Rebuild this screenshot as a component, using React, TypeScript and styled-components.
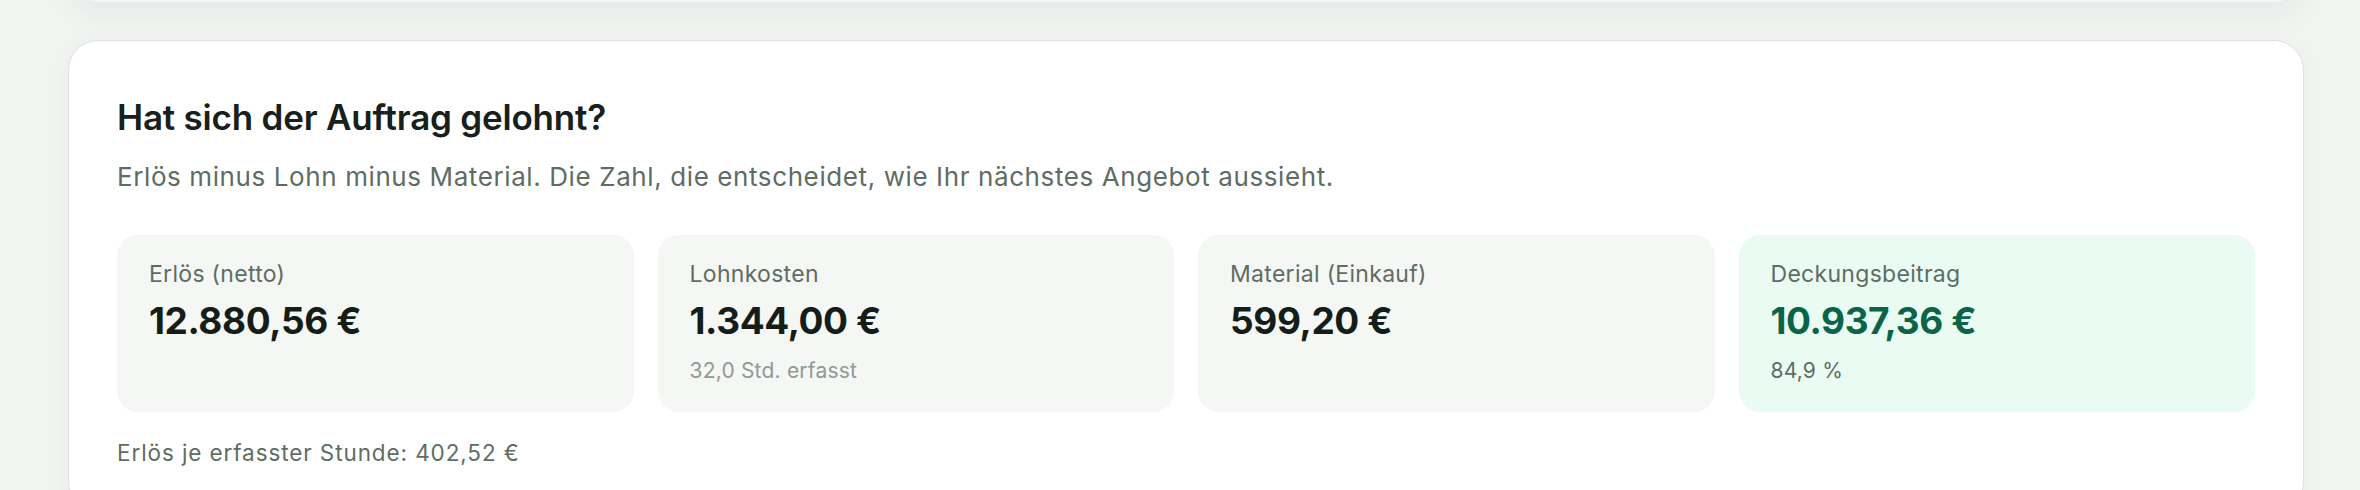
import React from "react";
import styled, { createGlobalStyle } from "styled-components";

const GlobalStyle = createGlobalStyle`
  html, body {
    margin: 0;
    padding: 0;
    background: #f2f4f2;
    font-family: Inter, "Liberation Sans", Arial, sans-serif;
    overflow: hidden;
  }
  * { box-sizing: border-box; }
`;

const Page = styled.main`
  display: flex;
  flex-direction: column;
  gap: 38px;
  padding: 0 56px 40px 68px;
  margin-top: -200px;
`;

const PrevCard = styled.div`
  height: 202px;
  border-radius: 30px;
  background: #f5f6f5;
  box-shadow: 0 12px 32px rgba(20, 40, 30, 0.05);
`;

const Card = styled.section`
  background: #ffffff;
  border: 1px solid #dde2dd;
  border-radius: 30px;
  box-shadow: 0 4px 24px rgba(20, 40, 30, 0.04);
  padding: 54px 48px 42px;
  display: flex;
  flex-direction: column;
`;

const Title = styled.h2`
  margin: 0;
  font-size: 35px;
  line-height: 44px;
  font-weight: 600;
  color: #17201b;
  letter-spacing: -0.2px;
`;

const Subtitle = styled.p`
  margin: 19px 0 0;
  font-size: 26px;
  line-height: 38px;
  letter-spacing: 0.6px;
  color: #5e6d63;
`;

const Tiles = styled.div`
  margin-top: 39px;
  display: grid;
  grid-template-columns: repeat(4, 1fr);
  gap: 24px;
`;

const Tile = styled.div<{ $accent?: boolean }>`
  background: ${(p) => (p.$accent ? "#e9fbf3" : "#f5f7f5")};
  border-radius: 21px;
  padding: 23px 32px;
  height: 177px;
  display: flex;
  flex-direction: column;
`;

const Label = styled.div`
  font-size: 23px;
  line-height: 32px;
  letter-spacing: 0.3px;
  color: #5e6d63;
`;

const Value = styled.div<{ $accent?: boolean }>`
  margin-top: 8px;
  font-size: 37px;
  line-height: 46px;
  font-weight: 700;
  letter-spacing: -0.4px;
  color: ${(p) => (p.$accent ? "#0b6447" : "#151d18")};
`;

const Note = styled.div<{ $muted?: boolean }>`
  margin-top: 12px;
  font-size: 21px;
  line-height: 30px;
  letter-spacing: 0.2px;
  color: ${(p) => (p.$muted ? "#8f9a93" : "#5e6d63")};
`;

const Footer = styled.p`
  margin: 25px 0 0;
  font-size: 22.5px;
  line-height: 32px;
  letter-spacing: 0.9px;
  color: #5e6d63;
`;

type Item = { label: string; value: string; note?: string; muted?: boolean; accent?: boolean };

const items: Item[] = [
  { label: "Erlös (netto)", value: "12.880,56 €" },
  { label: "Lohnkosten", value: "1.344,00 €", note: "32,0 Std. erfasst", muted: true },
  { label: "Material (Einkauf)", value: "599,20 €" },
  { label: "Deckungsbeitrag", value: "10.937,36 €", note: "84,9 %", accent: true },
];

export default function App() {
  return (
    <>
      <GlobalStyle />
      <Page>
        <PrevCard />
        <Card>
          <Title>Hat sich der Auftrag gelohnt?</Title>
          <Subtitle>
            Erlös minus Lohn minus Material. Die Zahl, die entscheidet, wie Ihr nächstes Angebot aussieht.
          </Subtitle>
          <Tiles>
            {items.map((it) => (
              <Tile key={it.label} $accent={it.accent}>
                <Label>{it.label}</Label>
                <Value $accent={it.accent}>{it.value}</Value>
                {it.note && <Note $muted={it.muted}>{it.note}</Note>}
              </Tile>
            ))}
          </Tiles>
          <Footer>Erlös je erfasster Stunde: 402,52 €</Footer>
        </Card>
      </Page>
    </>
  );
}
